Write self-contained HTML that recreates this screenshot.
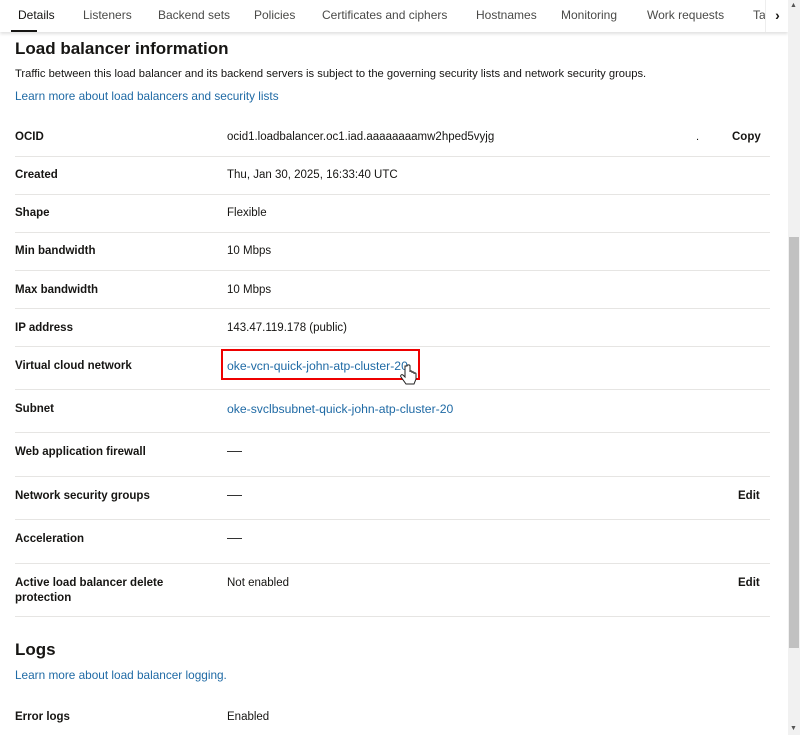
<!DOCTYPE html>
<html><head><meta charset="utf-8"><style>
body{margin:0;width:800px;height:735px;overflow:hidden;background:#fff;font-family:"Liberation Sans",sans-serif;color:#161513;position:relative}
.a{position:absolute;white-space:nowrap}
.tab{position:absolute;top:8px;font-size:12px;color:#4a4a48}
.lab{position:absolute;left:15px;font-size:11.5px;font-weight:bold;color:#161513}
.val{position:absolute;left:227px;font-size:11.5px;color:#161513}
.lnk{color:#1f6aa5}
.val.lnk{font-size:12.2px}
.hr{position:absolute;left:15px;width:755px;height:1px;background:#e6e5e3}
.dash{position:absolute;left:227px;width:15px;height:1px;background:#333}
</style></head><body>
<div class="a" style="left:0;top:0;width:788px;height:32px;background:#fff;box-shadow:0 2px 3px rgba(0,0,0,0.12)"></div>
<div class="tab" style="left:18px;color:#161513">Details</div>
<div class="a" style="left:11px;top:30px;width:26px;height:2px;background:#161513"></div>
<div class="tab" style="left:83px">Listeners</div>
<div class="tab" style="left:158px">Backend sets</div>
<div class="tab" style="left:254px">Policies</div>
<div class="tab" style="left:322px">Certificates and ciphers</div>
<div class="tab" style="left:476px">Hostnames</div>
<div class="tab" style="left:561px">Monitoring</div>
<div class="tab" style="left:647px">Work requests</div>
<div class="tab" style="left:753px">Ta</div>
<div class="a" style="left:765px;top:0;width:23px;height:32px;background:#fff;border-left:1px solid #eee;font-size:14px;font-weight:bold;text-align:center;line-height:30px">›</div>
<div class="a" style="left:788px;top:0;width:12px;height:735px;background:#f1f1f1"></div>
<div class="a" style="left:789px;top:237px;width:10px;height:411px;background:#c1c1c1"></div>
<div class="a" style="left:790px;top:2px;font-size:7px;color:#555">▲</div>
<div class="a" style="left:790px;top:725px;font-size:7px;color:#555">▼</div>

<div class="a" style="left:15px;top:39px;font-size:17px;font-weight:bold">Load balancer information</div>
<div class="a" style="left:15px;top:68px;font-size:11.2px">Traffic between this load balancer and its backend servers is subject to the governing security lists and network security groups.</div>
<div class="a lnk" style="left:15px;top:89px;font-size:11.8px">Learn more about load balancers and security lists</div>

<div class="lab" style="top:131px">OCID</div><div class="val" style="top:131px">ocid1.loadbalancer.oc1.iad.aaaaaaaamw2hped5vyjg</div>
<div class="a" style="left:696px;top:131px;font-size:11px">.</div>
<div class="a" style="left:732px;top:131px;font-size:11.5px;font-weight:bold">Copy</div>
<div class="hr" style="top:156px"></div>
<div class="lab" style="top:169px">Created</div><div class="val" style="top:169px">Thu, Jan 30, 2025, 16:33:40 UTC</div>
<div class="hr" style="top:194px"></div>
<div class="lab" style="top:207px">Shape</div><div class="val" style="top:207px">Flexible</div>
<div class="hr" style="top:232px"></div>
<div class="lab" style="top:245px">Min bandwidth</div><div class="val" style="top:245px">10 Mbps</div>
<div class="hr" style="top:270px"></div>
<div class="lab" style="top:284px">Max bandwidth</div><div class="val" style="top:284px">10 Mbps</div>
<div class="hr" style="top:308px"></div>
<div class="lab" style="top:322px">IP address</div><div class="val" style="top:322px">143.47.119.178 (public)</div>
<div class="hr" style="top:346px"></div>
<div class="lab" style="top:360px">Virtual cloud network</div><div class="val lnk" style="top:359px">oke-vcn-quick-john-atp-cluster-20</div>
<div class="a" style="left:221px;top:349px;width:195px;height:27px;border:2px solid #e00"></div>
<svg class="a" style="left:400px;top:364px" width="18" height="24" viewBox="0 0 18 24"><path d="M5 2 v11 l-2-2 c-1.5-1 -3 0.5 -2 2 l5 7 h8 l2-5 v-5 c0-1.5-2-1.5-2 0 v-1 c0-1.5-2-1.5-2 0 v-1 c0-1.5-2-1.5-2 0 V2 c0-1.5-3-1.5-3 0z" fill="#fff" stroke="#222" stroke-width="1"/></svg>
<div class="hr" style="top:389px"></div>
<div class="lab" style="top:403px">Subnet</div><div class="val lnk" style="top:402px">oke-svclbsubnet-quick-john-atp-cluster-20</div>
<div class="hr" style="top:432px"></div>
<div class="lab" style="top:446px">Web application firewall</div><div class="dash" style="top:451px"></div>
<div class="hr" style="top:476px"></div>
<div class="lab" style="top:490px">Network security groups</div><div class="dash" style="top:495px"></div>
<div class="a" style="left:738px;top:490px;font-size:11.5px;font-weight:bold">Edit</div>
<div class="hr" style="top:519px"></div>
<div class="lab" style="top:533px">Acceleration</div><div class="dash" style="top:538px"></div>
<div class="hr" style="top:563px"></div>
<div class="lab" style="top:576px;line-height:15px">Active load balancer delete<br>protection</div>
<div class="val" style="top:577px">Not enabled</div>
<div class="a" style="left:738px;top:577px;font-size:11.5px;font-weight:bold">Edit</div>
<div class="hr" style="top:616px"></div>
<div class="a" style="left:15px;top:640px;font-size:17px;font-weight:bold">Logs</div>
<div class="a lnk" style="left:15px;top:668px;font-size:11.8px">Learn more about load balancer logging.</div>
<div class="lab" style="top:711px">Error logs</div><div class="val" style="top:711px">Enabled</div>
</body></html>
